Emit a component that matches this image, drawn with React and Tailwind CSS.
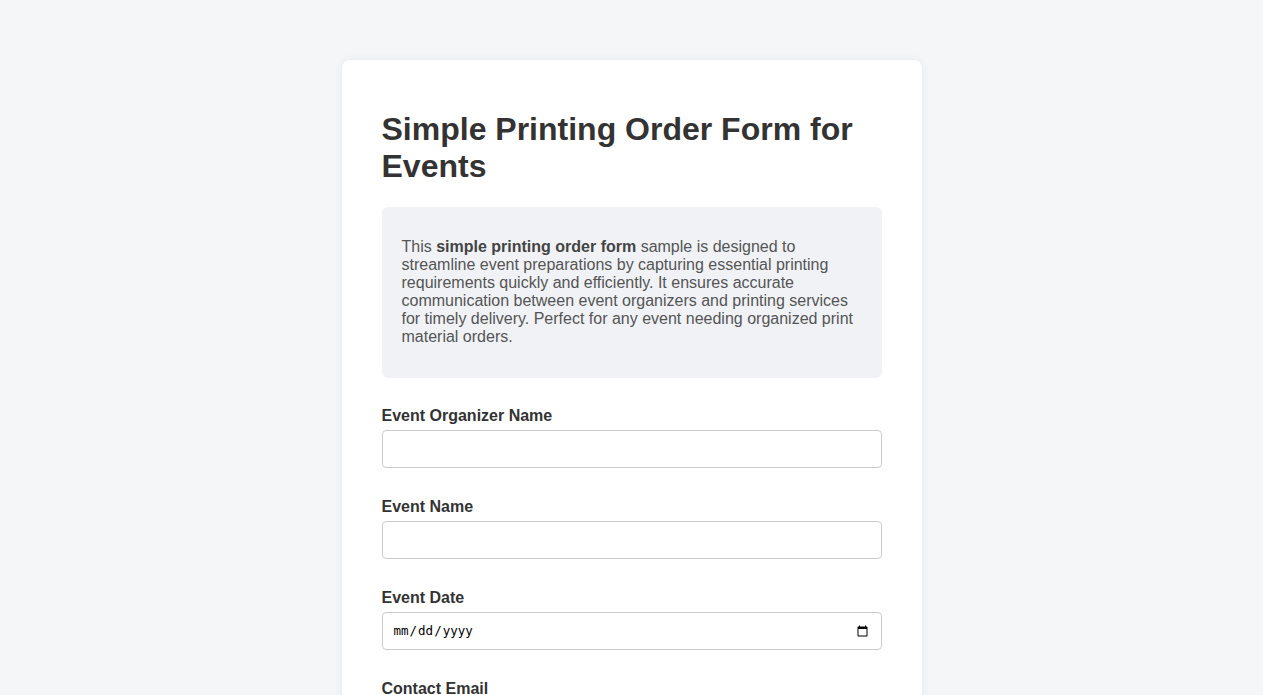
export default function App() {
  const field = (label, type = "text") => (
    <div className="mb-[29.6px]">
      <label className="block mb-[5px] text-[16px] font-bold text-[#333]">{label}</label>
      {type === "date" ? (
        <input
          type="date"
          className="block w-full h-[38px] px-[10px] border border-[#ccc] rounded-[4px] bg-white text-[12.5px] text-black outline-none"
          style={{ fontFamily: '"DejaVu Sans Mono", monospace' }}
        />
      ) : (
        <input
          type={type}
          className="block w-full h-[38px] px-[10px] border border-[#ccc] rounded-[4px] bg-white text-[16px] outline-none"
        />
      )}
    </div>
  );
  return (
    <div className="min-h-screen bg-[#f5f6f8] pt-[60px] pb-10 leading-[1.15]" style={{ fontFamily: '"Liberation Sans", Arial, sans-serif' }}>
      <div className="mx-auto w-[580px] bg-white rounded-[8px] shadow-[0_0_10px_rgba(0,0,0,0.06)] px-10 pt-[51px] pb-10">
        <h1 className="text-[32px] font-bold text-[#333] leading-[1.15] mb-[22px]">
          Simple Printing Order Form for Events
        </h1>
        <div className="bg-[#f0f2f5] rounded-[6px] px-5 pt-[31px] pb-[32px] mb-[29px]">
          <p className="text-[16px] text-[#555] leading-[18px]">
            This <strong className="font-bold text-[#444]">simple printing order form</strong> sample is designed to streamline event preparations by capturing essential printing requirements quickly and efficiently. It ensures accurate communication between event organizers and printing services for timely delivery. Perfect for any event needing organized print material orders.
          </p>
        </div>
        {field("Event Organizer Name")}
        {field("Event Name")}
        {field("Event Date", "date")}
        {field("Contact Email", "email")}
        {field("Phone Number", "tel")}
      </div>
    </div>
  );
}
